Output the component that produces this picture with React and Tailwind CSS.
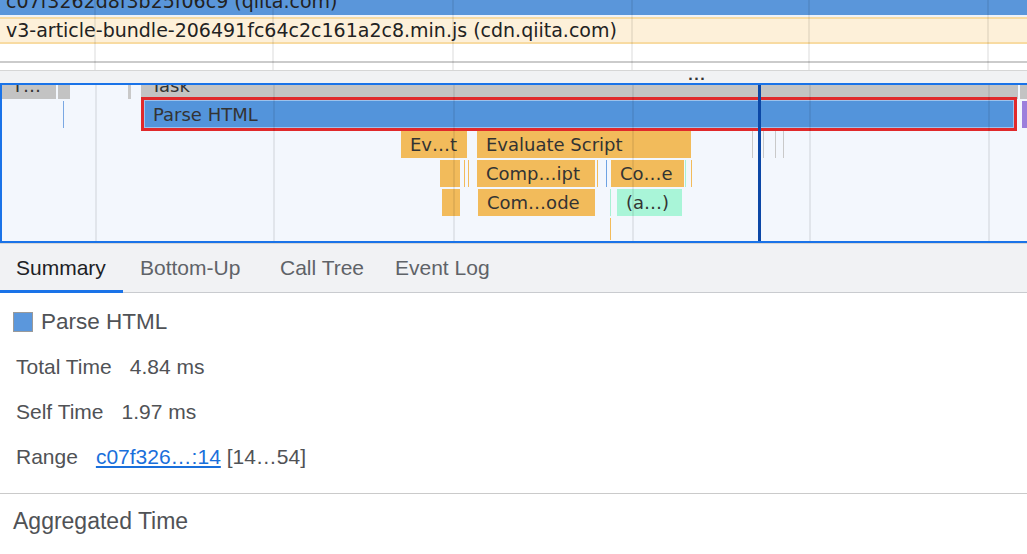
import React from 'react';

const gridX = [95, 273, 453, 632, 809, 988];

// flame chart bars: x, y (relative to chart top), w, h, color, label
const bars = [
  { x: 2, y: -1, w: 54, h: 15, c: 'bg-[#c3c3c3]', label: 'T…' },
  { x: 58, y: -1, w: 12, h: 15, c: 'bg-[#c3c3c3]' },
  { x: 128, y: -1, w: 3, h: 15, c: 'bg-[#c9c9c9]' },
  { x: 141, y: -1, w: 877, h: 15, c: 'bg-[#c3c3c3]', label: 'Task' },
  { x: 1020, y: -1, w: 7, h: 15, c: 'bg-[#c3c3c3]' },
  { x: 1022, y: 16, w: 5, h: 27, c: 'bg-[#9c7fdc]' },
  { x: 63, y: 16, w: 1, h: 27, c: 'bg-[#7aa8e3]' },
  { x: 401, y: 46, w: 66, h: 27, c: 'bg-[#f2bb5b]', label: 'Ev…t' },
  { x: 477, y: 46, w: 214, h: 27, c: 'bg-[#f2bb5b]', label: 'Evaluate Script' },
  { x: 440, y: 75, w: 20, h: 27, c: 'bg-[#f2bb5b]' },
  { x: 464, y: 75, w: 1, h: 27, c: 'bg-[#f2bb5b]' },
  { x: 468, y: 75, w: 1, h: 27, c: 'bg-[#f2bb5b]' },
  { x: 477, y: 75, w: 118, h: 27, c: 'bg-[#f2bb5b]', label: 'Comp…ipt' },
  { x: 597, y: 75, w: 1, h: 27, c: 'bg-[#f2bb5b]' },
  { x: 606, y: 75, w: 1, h: 27, c: 'bg-[#6ea3e3]' },
  { x: 611, y: 75, w: 73, h: 27, c: 'bg-[#f2bb5b]', label: 'Co…e' },
  { x: 685, y: 75, w: 1, h: 27, c: 'bg-[#a8f0d4]' },
  { x: 691, y: 75, w: 1, h: 27, c: 'bg-[#f2bb5b]' },
  { x: 442, y: 104, w: 18, h: 27, c: 'bg-[#f2bb5b]' },
  { x: 478, y: 104, w: 117, h: 27, c: 'bg-[#f2bb5b]', label: 'Com…ode' },
  { x: 610, y: 104, w: 1, h: 27, c: 'bg-[#a8f0d4]' },
  { x: 617, y: 104, w: 65, h: 27, c: 'bg-[#a9f5d8]', label: '(a…)' },
  { x: 610, y: 133, w: 1, h: 22, c: 'bg-[#f2bb5b]' },
  { x: 752, y: 46, w: 1, h: 27, c: 'bg-[#c9c9c9]' },
  { x: 763, y: 46, w: 1, h: 27, c: 'bg-[#c9c9c9]' },
  { x: 775, y: 46, w: 1, h: 27, c: 'bg-[#c9c9c9]' },
  { x: 783, y: 46, w: 1, h: 27, c: 'bg-[#c9c9c9]' },
];

const tabs = [
  { name: 'Summary', w: 'w-[123px] pl-[16px]' },
  { name: 'Bottom-Up', w: 'w-[140px] pl-[17px]' },
  { name: 'Call Tree', w: 'w-[115px] pl-[17px]' },
  { name: 'Event Log', w: 'pl-[17px]' },
];

const FlameChart = () => (
  <div className="relative h-[158px] bg-[#f3f7fd] border-l-2 border-b-2 border-[#1a73e8] overflow-hidden font-['DejaVu_Sans',sans-serif]">
    {bars.map((b, i) => (
      <div
        key={i}
        className={`absolute ${b.c} flex items-center overflow-hidden whitespace-nowrap text-[18px] text-[#333]`}
        style={{ left: b.x - 2, top: b.y, width: b.w, height: b.h }}
      >
        {b.label && (
          <span className={b.h < 20 ? 'pl-[10px] leading-[15px] -mt-[12px]' : 'pl-[9px]'}>{b.label}</span>
        )}
      </div>
    ))}

    {/* selected Parse HTML entry */}
    <div
      className="absolute border-[3px] border-[#e0292b] bg-white/60"
      style={{ left: 139, top: 12, width: 876, height: 34 }}
    >
      <div className="h-full bg-[#5394db] border border-[#9cc2ec] flex items-center whitespace-nowrap text-[18px] text-[#333] pl-[8px]">
        Parse HTML
      </div>
    </div>

    {gridX.map((x) => (
      <div key={x} className="absolute top-0 bottom-0 w-[2px] bg-black/[0.07]" style={{ left: x - 2 }} />
    ))}

    {/* time cursor */}
    <div className="absolute top-0 bottom-0 w-[3px] bg-[#0b47a6]" style={{ left: 756 }} />
  </div>
);

export default function App() {
  return (
    <div className="w-[1027px] h-[554px] overflow-hidden bg-white font-['Liberation_Sans',Arial,sans-serif]">
      <div className="relative font-['DejaVu_Sans',sans-serif]">
        <div className="h-[15px] bg-[#5a96da] flex items-end overflow-hidden">
          <span className="pl-[6px] text-[19px] leading-[27px] text-[#222] whitespace-nowrap">
            c07f3262d8f3b25f06c9 (qiita.com)
          </span>
        </div>
        <div className="h-[2px] bg-[#eef3fa]" />
        <div className="h-[27px] bg-[#fdf0d9] border-y-2 border-[#f8dba2] flex items-center">
          <span className="pl-[6px] text-[19px] text-[#222] whitespace-nowrap">
            v3-article-bundle-206491fc64c2c161a2c8.min.js (cdn.qiita.com)
          </span>
        </div>
        <div className="h-[19px] border-b-2 border-[#cbcbcb]" />
        <div className="h-[7px]" />
        <div className="h-[15px] bg-[#f1f2f4] border-t border-[#d6d6d6] border-b-2 border-b-[#1a73e8] flex items-center">
          <span className="ml-[688px] text-[13px] leading-[13px] tracking-[1px] text-[#333] font-bold -mt-[4px]">...</span>
        </div>
        {gridX.map((x) => (
          <div key={x} className="absolute top-0 h-[70px] w-[2px] bg-black/[0.07]" style={{ left: x - 1 }} />
        ))}
      </div>

      <FlameChart />

      <div className="h-[50px] bg-[#f1f2f4] border-t border-[#d6d6d6] border-b border-b-[#c9cbcf] flex items-stretch text-[21px]">
        {tabs.map((t, i) => (
          <div
            key={t.name}
            className={`flex items-center pt-[2px] border-b-[3px] -mb-px ${t.w} ${
              i === 0 ? 'border-[#1a73e8] text-[#202124]' : 'border-transparent text-[#5f6368]'
            }`}
          >
            {t.name}
          </div>
        ))}
      </div>

      <div className="pt-[6px] text-[#505256]">
        <div className="h-[45px] flex items-center pl-[13px] gap-[8px] text-[22.5px]">
          <div className="w-[20px] h-[20px] bg-[#5b97dc] border border-[#9a9a9a]" />
          <span>Parse HTML</span>
        </div>
        <div className="h-[45px] flex items-center pl-[16px] gap-[18px] text-[21px]">
          <span>Total Time</span>
          <span>4.84 ms</span>
        </div>
        <div className="h-[45px] flex items-center pl-[16px] gap-[18px] text-[21px]">
          <span>Self Time</span>
          <span>1.97 ms</span>
        </div>
        <div className="h-[45px] flex items-center pl-[16px] gap-[18px] text-[21px]">
          <span>Range</span>
          <span>
            <a href="#" className="text-[#1a6fdb] underline">c07f326…:14</a> [14…54]
          </span>
        </div>
        <div className="mt-[14px] border-t border-[#cacaca] h-[56px] flex items-center pl-[13px] text-[23px]">
          Aggregated Time
        </div>
      </div>
    </div>
  );
}
